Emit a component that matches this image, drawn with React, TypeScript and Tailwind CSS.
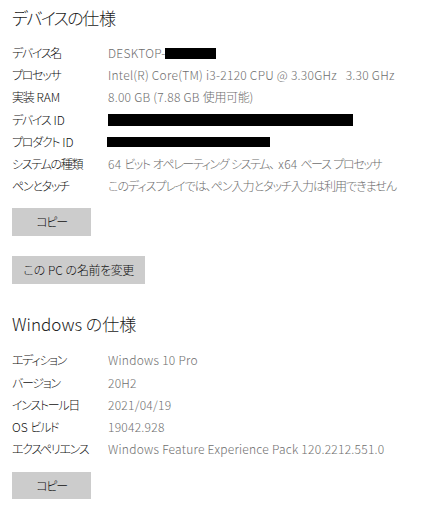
import React from "react";

const font = {
  fontFamily: '"Noto Sans CJK JP", "Noto Sans", sans-serif',
};

function J({ children, t = "tracking-[-1px]" }: { children: React.ReactNode; t?: string }) {
  return <span className={t}>{children}</span>;
}

function Row({ label, children }: { label: React.ReactNode; children: React.ReactNode }) {
  return (
    <div className="flex h-[22.2px] items-center">
      <div className="w-[96px] shrink-0 whitespace-nowrap text-[12px] font-light text-[#111] [font-feature-settings:'palt']">{label}</div>
      <div className="whitespace-nowrap text-[12px] font-light leading-[16px] tracking-[0.25px] text-[#6e6e6e] [font-feature-settings:'palt']">{children}</div>
    </div>
  );
}

function L({ children }: { children: React.ReactNode }) {
  return <span className="tracking-[-1.3px]">{children}</span>;
}

function Btn({ children, w, h }: { children: React.ReactNode; w: string; h: string }) {
  return (
    <div className={`${w} ${h} flex items-center justify-center whitespace-pre bg-[#cccccc] text-[12px] font-light text-[#111] [font-feature-settings:'palt']`}>
      <span>{children}</span>
    </div>
  );
}

export default function App() {
  return (
    <div className="h-[512px] w-[423px] overflow-hidden bg-white px-[12px] pt-[7px]" style={font}>
      <div className="flex h-[22px] items-center text-[17px] font-light text-[#1a1a1a] [font-feature-settings:'palt']">
        <span className="tracking-[-1.6px]">デバイスの</span>
        <span>仕様</span>
      </div>
      <div className="mt-[13px]">
        <Row label={<L>デバイス名</L>}>
          DESKTOP-<span className="inline-block h-[11px] w-[51px] bg-black align-[-1px]" />
        </Row>
        <Row label={<L>プロセッサ</L>}>Intel(R) Core(TM) i3-2120 CPU @ 3.30GHz&nbsp;&nbsp;&nbsp;3.30 GHz</Row>
        <Row label={<><L>実装</L><span className="ml-[3px]">RAM</span></>}>
          8.00 GB (7.88 GB <J t="tracking-[-0.3px]">使用可能</J>)
        </Row>
        <Row label={<><L>デバイス</L><span className="ml-[3px]">ID</span></>}>
          <span className="block h-[12px] w-[245px] bg-black" />
        </Row>
        <Row label={<><L>プロダクト</L><span className="ml-[3px]">ID</span></>}>
          <span className="-ml-[1px] block h-[10px] w-[163px] bg-black" />
        </Row>
        <Row label={<L>システムの種類</L>}>
          64 <J t="tracking-[-1.4px]">ビット</J> <J t="tracking-[-1.4px]">オペレーティング</J> <J t="tracking-[-1.4px]">システム</J>
          <span className="mr-[3px]">、</span>x64 <J t="tracking-[-1.4px]">ベース</J> <J t="tracking-[-1.4px]">プロセッサ</J>
        </Row>
        <Row label={<L>ペンとタッチ</L>}>
          <J>このディスプレイでは、ペン入力とタッチ入力は利用できません</J>
        </Row>
      </div>
      <div className="mt-[11px]">
        <Btn w="w-[79px]" h="h-[28px]"><L>コピー</L></Btn>
      </div>
      <div className="mt-[20px]">
        <Btn w="w-[133px]" h="h-[28px]">この PC の<J t="tracking-[-0.5px]">名前を変更</J></Btn>
      </div>
      <div className="mt-[28px] flex h-[22px] items-center text-[17px] font-light text-[#1a1a1a] [font-feature-settings:'palt']">Windows の仕様</div>
      <div className="mt-[15px]">
        <Row label={<L>エディション</L>}>Windows 10 Pro</Row>
        <Row label={<L>バージョン</L>}>20H2</Row>
        <Row label={<L>インストール日</L>}>2021/04/19</Row>
        <Row label={<>OS <L>ビルド</L></>}>19042.928</Row>
        <Row label={<L>エクスペリエンス</L>}>Windows Feature Experience Pack 120.2212.551.0</Row>
      </div>
      <div className="mt-[12px]">
        <Btn w="w-[79px]" h="h-[27px]"><L>コピー</L></Btn>
      </div>
    </div>
  );
}
